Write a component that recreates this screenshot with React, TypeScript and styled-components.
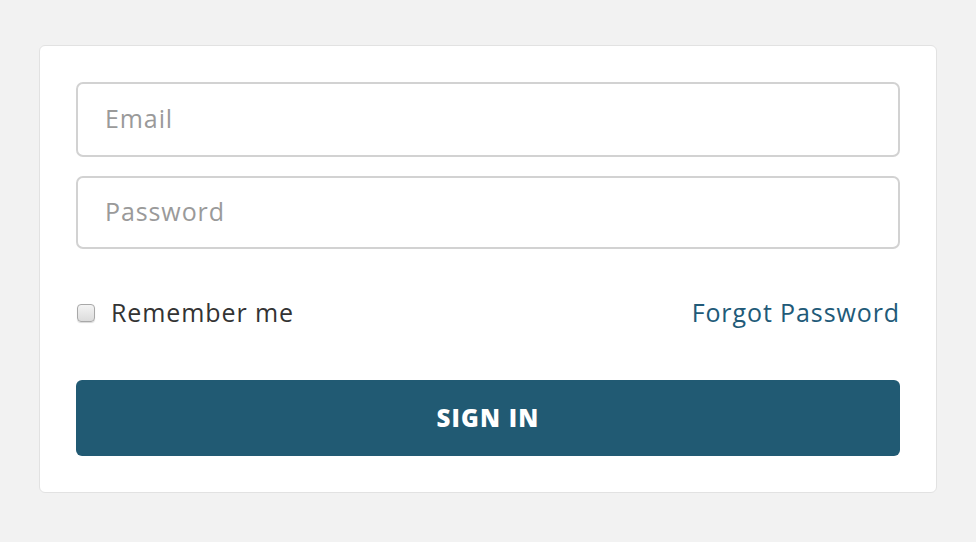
import React from 'react';
import styled, { createGlobalStyle } from 'styled-components';

const Global = createGlobalStyle`
  html, body {
    margin: 0;
    padding: 0;
    background: #f2f2f2;
    font-family: "Open Sans", Lato, "Liberation Sans", sans-serif;
  }
`;

const Page = styled.div`
  padding: 45px 39px 49px 39px;
`;

const Card = styled.form`
  box-sizing: border-box;
  width: 898px;
  background: #fff;
  border: 1px solid #e2e2e2;
  border-radius: 6px;
  padding: 36px 36px 36px 36px;
  display: flex;
  flex-direction: column;
`;

const Input = styled.input`
  box-sizing: border-box;
  width: 100%;
  height: ${(p: { $h: number }) => p.$h}px;
  border: 2px solid #d2d2d2;
  border-radius: 7px;
  padding: 0 27px 4px 27px;
  font-family: inherit;
  font-size: 25px;
  letter-spacing: 0.9px;
  color: #333;
  outline: none;
  & + & {
    margin-top: 19px;
  }
  &::placeholder {
    color: #9a9a9a;
  }
`;

const Row = styled.div`
  display: flex;
  align-items: center;
  justify-content: space-between;
  margin-top: 47px;
  height: 32px;
  font-size: 25px;
  letter-spacing: 0.9px;
`;

const Remember = styled.label`
  display: flex;
  align-items: center;
  color: #333;
`;

const Check = styled.span`
  box-sizing: border-box;
  width: 18px;
  height: 18px;
  margin-left: 1px;
  margin-right: 16px;
  margin-top: 2px;
  border: 1px solid #a8a8a8;
  border-radius: 4px;
  background: linear-gradient(#f4f4f4, #dcdcdc);
  box-shadow: 0 1px 1px rgba(0, 0, 0, 0.15);
`;

const Forgot = styled.a`
  color: #215a78;
  text-decoration: none;
`;

const Button = styled.button`
  margin-top: 52px;
  height: 76px;
  width: 100%;
  border: none;
  border-radius: 6px;
  background: #215a73;
  color: #fff;
  font-family: inherit;
  font-weight: 800;
  font-size: 24px;
  letter-spacing: 1.2px;
  padding: 0 0 2px 0;
`;

export default function App() {
  return (
    <Page>
      <Global />
      <Card onSubmit={(e) => e.preventDefault()}>
        <Input $h={75} type="email" placeholder="Email" />
        <Input $h={73} type="password" placeholder="Password" />
        <Row>
          <Remember>
            <Check />
            Remember me
          </Remember>
          <Forgot href="#">Forgot Password</Forgot>
        </Row>
        <Button type="submit">SIGN IN</Button>
      </Card>
    </Page>
  );
}
